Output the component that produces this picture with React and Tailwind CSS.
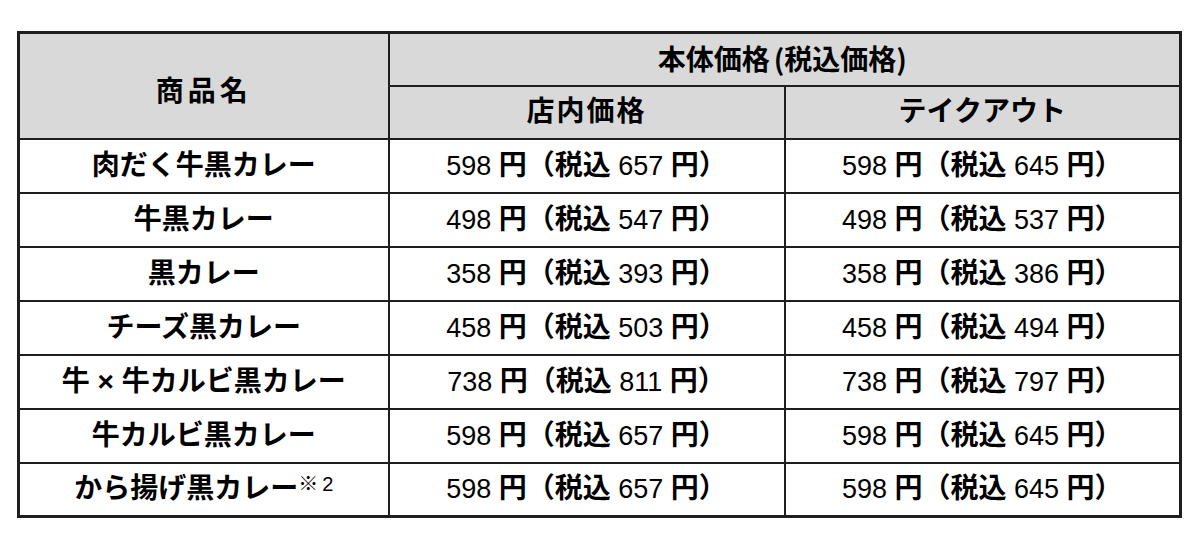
import React from "react";

const rows = [
  { name: "肉だく牛黒カレー", inStore: ["598", "657"], takeout: ["598", "645"] },
  { name: "牛黒カレー", inStore: ["498", "547"], takeout: ["498", "537"] },
  { name: "黒カレー", inStore: ["358", "393"], takeout: ["358", "386"] },
  { name: "チーズ黒カレー", inStore: ["458", "503"], takeout: ["458", "494"] },
  { name: "牛 × 牛カルビ黒カレー", inStore: ["738", "811"], takeout: ["738", "797"] },
  { name: "牛カルビ黒カレー", inStore: ["598", "657"], takeout: ["598", "645"] },
  { name: "から揚げ黒カレー", note: true, inStore: ["598", "657"], takeout: ["598", "645"] },
];

const Price = ({ value }) => (
  <span className="whitespace-nowrap">
    <span className="font-normal text-[27px]">{value[0]} </span>円（税込
    <span className="font-normal text-[27px]"> {value[1]} </span>円）
  </span>
);

const App = () => {
  return (
    <div className="w-[1200px] h-[538px] bg-white pt-[31px] pl-[17px] font-['Liberation_Sans','Noto_Sans_CJK_JP',sans-serif] text-black">
      <table className="w-[1162px] border-collapse border-[3px] border-[#1e1e1e] table-fixed">
        <colgroup>
          <col className="w-[370px]" />
          <col className="w-[396px]" />
          <col className="w-[396px]" />
        </colgroup>
        <thead>
          <tr className="h-[53px] bg-[#d9d9d9]">
            <th rowSpan={2} className="border-2 border-[#1e1e1e] text-[28px] font-bold pt-[12px] tracking-[4px]">
              商品名
            </th>
            <th colSpan={2} className="border-2 border-[#1e1e1e] text-[28px] font-bold whitespace-nowrap">
              本体価格
              <span className="font-['Noto_Sans_CJK_JP',sans-serif] ml-[4px]">(</span>
              税込価格
              <span className="font-['Noto_Sans_CJK_JP',sans-serif] mr-[4px]">)</span>
            </th>
          </tr>
          <tr className="h-[53px] bg-[#d9d9d9]">
            <th className="border-2 border-[#1e1e1e] text-[28px] font-bold tracking-[2px]">店内価格</th>
            <th className="border-2 border-[#1e1e1e] text-[28px] font-bold">テイクアウト</th>
          </tr>
        </thead>
        <tbody>
          {rows.map((row) => (
            <tr key={row.name} className="h-[54px]">
              <td className="border-2 border-[#1e1e1e] text-center text-[28px] font-bold whitespace-nowrap">
                {row.name}
                {row.note && (
                  <span className="text-[20px] font-normal align-top relative top-[1px]">
                    ※<span className="ml-[4px]">2</span>
                  </span>
                )}
              </td>
              <td className="border-2 border-[#1e1e1e] text-center text-[28px] font-bold">
                <Price value={row.inStore} />
              </td>
              <td className="border-2 border-[#1e1e1e] text-center text-[28px] font-bold">
                <Price value={row.takeout} />
              </td>
            </tr>
          ))}
        </tbody>
      </table>
    </div>
  );
};

export default App;
